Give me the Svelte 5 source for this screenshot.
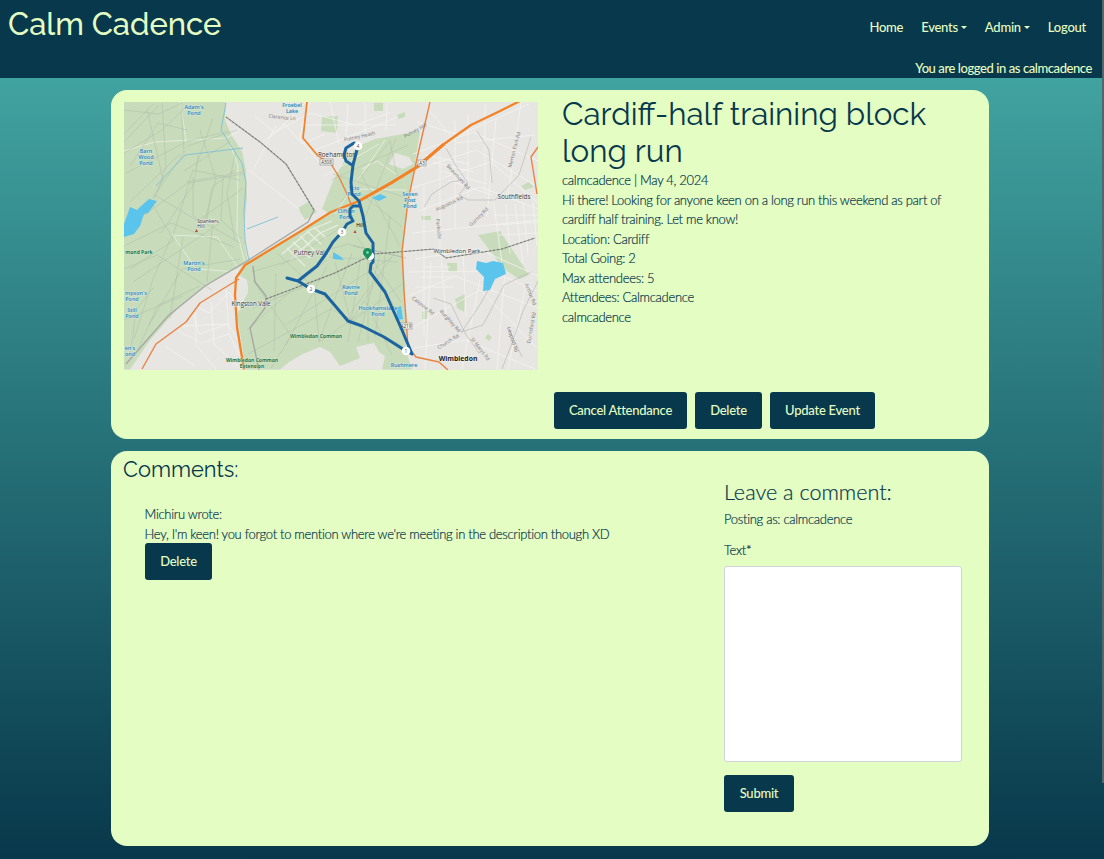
<script>
  const details = [
    'calmcadence | May 4, 2024',
    'Hi there! Looking for anyone keen on a long run this weekend as part of cardiff half training. Let me know!',
    'Location: Cardiff',
    'Total Going: 2',
    'Max attendees: 5',
    'Attendees: Calmcadence',
    'calmcadence'
  ];
  const nav = [
    { label: 'Home' },
    { label: 'Events', menu: true },
    { label: 'Admin', menu: true },
    { label: 'Logout' }
  ];

  const waterLabels = [
    [194, 109, "Adam's"], [194, 115, 'Pond'],
    [292, 107, 'Froebel'], [292, 113, 'Lake'],
    [146, 153, 'Barn'], [146, 159, 'Wood'], [146, 165, 'Pond'],
    [354, 190, 'Scio'], [354, 196, 'Pond'],
    [410, 196, 'Seven'], [410, 202, 'Post'], [410, 208, 'Pond'],
    [346, 213, 'Clifton'], [346, 219, 'Pond'],
    [194, 265, "Martin's"], [194, 271, 'Pond'],
    [136, 295, "mpson's"], [132, 301, 'Pond'],
    [132, 312, 'Still'], [132, 318, 'Pond'],
    [130, 350, "en's"], [130, 356, 'ond'],
    [351, 289, 'Ravine'], [351, 295, 'Pond'],
    [378, 310, 'Hookhamslade'], [378, 316, 'Pond'],
    [404, 367, 'Rushmere']
  ];
  const parkLabels = [
    [139, 254, 'mond Park'], [316, 338, 'Wimbledon Common'],
    [252, 362, 'Wimbledon Common'], [252, 368, 'Extension']
  ];
  const placeLabels = [
    [337, 156.500, 'Roehampton', 6.3], [514, 198.500, 'Southfields', 6.3],
    [311, 254.500, 'Putney Vale', 6.3], [457, 253, 'Wimbledon Park', 6.1],
    [251, 306, 'Kingston Vale', 6.2], [208, 223, 'Spankers', 5], [201, 228, 'Hill', 5]
  ];
  const roadLabels = [
    [360, 138, 'Putney Heath', -12], [416, 132, 'Putney Hill', -28],
    [516, 150, 'Merton Park Rd', -76], [457, 178, 'Beaumont Rd', 48],
    [450, 205, 'Augustus Rd', -25], [480, 218, 'Gurney Rd', -45],
    [282, 119, 'Clarence Ln', 6], [422, 307, 'Calonne Rd', 38],
    [449, 322, 'Burghley Rd', 48], [449, 343, 'Church Rd', -32],
    [479, 350, 'St Marys Rd', 52], [511, 340, 'Leopold Rd', 72],
    [529, 295, 'Arthur Rd', 68], [533, 328, 'Durnsford Rd', -80],
    [437, 229, 'Parkside', 84]
  ];
  const markers = [[358, 146, '4'], [342, 232, '3'], [311, 289, '2'], [406, 351, '1']];
</script>

<div class="page">
  <header>
    <div class="bar">
      <a class="brand" href="/">Calm Cadence</a>
      <nav>
        {#each nav as item}
          <a href="/">{item.label}{#if item.menu}<i class="caret"></i>{/if}</a>
        {/each}
      </nav>
    </div>
    <p class="session">You are logged in as calmcadence</p>
  </header>

  <main>
    <section class="card event">
      <div class="overview">
        <svg class="map" viewBox="124 102 414 267.5" preserveAspectRatio="none" role="img" aria-label="Route map">
          <rect x="124" y="102" width="414" height="268" fill="#e7e6e3" />
          <g fill="#c8dcbc">
            <path d="M124 102H226L225 120L232 136L242 151L246 170L247 199L244 225L245 245L248 263L232 271L205 286L180 306L150 340L130 369.5H124Z" />
            <path d="M245 265L330 214L322 209L333 181L343 163L358 146L375 139L420 131L415 163L411 183L406 222L403 252L405 290L406 350L412 369.500H382L385 356L379 352L374 343L356 347L360 358L340 366L330 352L320 347L303 354L289 362L280 369.5H245L242 345L237 315L248 292L247 280L239 275Z" />
            <path d="M298 208l10-6 9 10-12 8zM322 117l16-1-1 17-16-2zM374 103h9v8h-9zM397 115l8-3v5l-7 2zM478 235l22-4 29 44-10 4-15-10zM447 263h10v9h-8zM455 299l10-5-1 18-7-4zM422 312l6-2-1 9h-5zM488 334l4 3-3 4-4-3zM521 186l8-4 5 5-9 3zM421 216h10v4h-9z" />
          </g>
          <path d="M395 153l14 4 4 7-10 5-14-5z" fill="#e7e6e3" />
          <path d="M236 279q12 0 12 9t-10 14z" fill="#e5e6e1" />
          <path d="M282 254l28-24 22-9M290 260l30-27 18-8M287 248l18 18M293 242l17 16M300 236l15 15M307 231l14 13M314 227l12 11" fill="none" stroke="#e9ede2" stroke-width="1.300" />

          <g fill="none" stroke="#f5f5f1" stroke-width=".9" opacity=".85">
            <path d="M270 135l40-22 45 12 35-12M255 116l20 17 31-31M260 144l25-20 17 20 23-10M276 126l-22 42M310 102l-11 36 22 26M330 102l9 42M348 104l-2 35M365 103v32M387 102l-1 29M300 125h96M313 151l85-34M249 170l51 40" />
            <path d="M417 122l42 13 70-31M427 108l30 35 78-8M413 154l60-22 65 29M421 168l55-18 62 37M409 189l82-27 47 41M419 211l61-24 58 22M412 233l126-13M415 259l64-10 59 27M408 272l82-1 48 20M409 296l46-20 83 32M408 330l72-40 57 58M414 348l51-8 70 29M424 184v153M440 154v96M455 121v108M468 114v83M485 104v90M496 119l-9 97M521 102l-13 94M523 203l5 52M493 199l10 71M441 256l5 61M431 261l-6 108M463 249l3 67M480 280l-18 89M505 272l-8 97M525 289l-17 80M420 277h31M415 287h39M423 267h27M425 155l44 9M433 162l41 10M441 171l46 13M448 180l44 15M495 215h43M497 225l41-3M499 235l39-2M506 204l4 50M515 204l8 60M533 202l4 44" />
            <path d="M195 306l14 7 20-21 11 18M193 314l6 20 29-10 11 18M178 331l24 12 27-9 13 27M165 346l30 20M196 307v38l20 24M211 302l3 42 27 25M226 290l3 42M182 326l47-2" />
            <path d="M124 151L155 142L226 138L239 131M172 234l24 35 43 3M172 235l45 2 20 29M230 144l8 22-1 66 8 31M180 102l4 24 2 17M323 177l56-33M335 214l50-74M350 189l57 1M362 169l15-8 20 14" stroke="#edf2e4" />
          </g>
          <g fill="none" stroke="#adb8a4" stroke-width=".55" opacity=".8">
            <path d="M124 110l35 4 23-11M124 134l29-30M124 142l34-36M124 153l38-23 25-24M130 166l28-43 29 7M126 173l62-32 41-10M130 202l50-48M147 109l16 71-10 18M162 103l4 64-11 31M181 103l3 50-27 39M188 146l49-16M184 171l45-29M186 182l57-10M124 230l64-47 56-9M153 194l45 27 45-33M161 233l33-49 4-29M172 239l21-69 47 10M193 177v39l47 27M200 130l16 49-12 44M213 118l-17 49M207 220l5-33 23-17M223 178l-2 42 20 18M235 153l-8 41 8 47M149 199l25 41-44 29M124 246l47-23 63 24M124 269l33-14 55 35M171 238l-18 41-19 60M183 237l-13 81M213 221l-6 61M133 282l87-59M149 325l33-56 58-10M138 349l20-44 42-19M124 320l59-24M130 358l6-48 17-22" />
            <path d="M331 180l77-35M341 202l49-61 7 35M362 225l34-87M333 174l71 23M350 222l-69 43M277 253l74 68 31-48M251 272l97-28 55 13M253 308l55-23 68-32M247 330l79-70M248 354l83-45 72 37M253 280l38 56-20 32M276 273l-2 78M315 293l4 49 52-36M327 266l-41 79M335 262l16 61M352 253l-33 88M361 256l-13 86M368 253v89M381 250l-23 92M396 251l-46 63M390 216l-15 121M402 284l-54 41M357 237l44 65M285 325l107-68M374 270l27 49M365 301l27 54M329 257l69 5M361 174l39 72M358 191l44 36" />
          </g>
          <g fill="none" stroke="#aaa" stroke-width=".8">
            <path d="M424 207l8-13 19-12 12-2M446 148l10 18 12 17-9 12 9 5h27M495 200l24-25 12-38M477 131l12 19 3 33M433 298l18 6 14 29 14 20M461 332l22-7 21-40 27-13M498 272l-17 31-20 30M508 327l14 30M538 281l-15 30-11 32-10 26M353 246l53 12" opacity=".65" />
          </g>
          <g fill="none" stroke="#a5a8a3" stroke-width="1.4"><path d="M226 117l34 25 26 22 16 26 12 20-6 12-61 39-42 25-37 30-42 48M253 266l2 16 11 14-1 12-15 20 9 42" /></g>
          <path d="M266 299l69-26 39-19 60-5 12 9 56-9 33-11" fill="none" stroke="#a4a9a0" stroke-width="1.100" />
          <g fill="none" stroke="#555" stroke-width=".7" stroke-dasharray="2 2"><path d="M226 117l34 25 26 22 16 26 12 20M266 299l69-26 39-19 60-5 12 9 56-9 33-11" /></g>

          <g fill="none" stroke="#80bfd3" stroke-width=".9"><path d="M226 103l-5 27 12 19 9 14 4 20-2 29 1 28 4 21M156 186l29-31 58-7M247 229l31-12" /></g>
          <g fill="#5bc4ed">
            <path d="M140 207l9-8 8 2-9 12-4 1-4 12-6 8-10 3v-13l6-17 7 3zM477 261l9 2 7-2 10 2 3 11-11 5-5 11-7 1 1-14-8-8zM372 198l8-4 7 3-8 4zM333 252l7 4 4 4-11-1zM396 308l5-2 2 13-5 1z" />
          </g>

          <g fill="none" stroke-linejoin="round">
            <path d="M239 279l-39 24-14 19-30 22-14 25M430 102l-10 43-4 18-8 38-6 50 2 40 4 56 8 10 23 5 9 8M331 164l8 13 8 17 4 10M538 147l-7 10 6 37" stroke="#e98341" stroke-width="1.400" />
            <path d="M307 102l-4 36 15 18 15 9" stroke="#f38227" stroke-width="1.8" />
            <path d="M244 369.500L237 327L235 295L236 278L245 265L301 231L331 212L359 201L391 183L417 167L444 144L471 125L500 111L520 101" stroke="#f38227" stroke-width="2.3" />
            <path d="M359 201L391 183L417 167L444 144" stroke="#f38227" stroke-width="3" />
          </g>

          <g class="road">{#each roadLabels as [x, y, name, angle]}<text {x} {y} transform="rotate({angle} {x} {y})">{name}</text>{/each}</g>
          <g class="water">{#each waterLabels as [x, y, name]}<text {x} {y}>{name}</text>{/each}</g>
          <g class="park">{#each parkLabels as [x, y, name]}<text {x} {y}>{name}</text>{/each}</g>
          <g class="place">{#each placeLabels as [x, y, name, size]}<text {x} {y} font-size={size}>{name}</text>{/each}<text class="town" x="458" y="361">Wimbledon</text></g>
          <g class="shield">
            <rect x="320" y="159" width="13" height="6" /><text x="326.5" y="164">A308</text>
            <rect x="418" y="160" width="8" height="6" /><text x="422" y="165">A3</text>
            <rect x="400" y="323" width="12" height="6" /><text x="406" y="328">A219</text>
          </g>
          <path d="M195 232l1.5-3 1.500 3zM353.500 233l1.500-3 1.500 3z" fill="#b64732" />
          <text x="360" y="227" font-size="5" text-anchor="middle">Hill</text>

          <path d="M287 278L298 281L311 289L325 294L337 308L348 321L362 326L384 337L406 351L412 354L402 330L385 292L370 272L371 264L373 262L373 243L366 233L363 216L359 201L352 194L351 182L353 165L358 146L354 143L346 148L344 155L346 161L352 165M298 281L308 273L317 266L325 255L333 242L342 232L347 224L353 221L350 216V209L353 206H359" fill="none" stroke="#1c649f" stroke-width="3" stroke-linejoin="round" stroke-linecap="round" />
          {#each markers as [x, y, n]}
            <circle cx={x} cy={y} r="4.300" fill="#fff" />
            <text x={x} y={y + 1.7} font-size="5" text-anchor="middle" fill="#555">{n}</text>
          {/each}
          <circle cx="370" cy="256" r="4" fill="#fff" />
          <path d="M367.500 260c-2-4-4.500-4.500-4.500-7.500a4.500 4.500 0 019 0c0 3-2.500 3.500-4.500 7.500z" fill="#15935c" />
          <circle cx="367.500" cy="252.500" r="1.300" fill="#9ed4b9" />
        </svg>
        <div class="info">
          <h1>Cardiff-half training block<br />long run</h1>
          {#each details as line}<p>{line}</p>{/each}
        </div>
      </div>
      <div class="actions">
        <button style:width="133px">Cancel Attendance</button>
        <button style:width="67px">Delete</button>
        <button style:width="105px">Update Event</button>
      </div>
    </section>

    <section class="card discussion">
      <div class="comments">
        <h2>Comments:</h2>
        <article>
          <p>Michiru wrote:</p>
          <p>Hey, I'm keen! you forgot to mention where we're meeting in the description though XD</p>
          <button style:width="67px">Delete</button>
        </article>
      </div>
      <form>
        <h3>Leave a comment:</h3>
        <p>Posting as: calmcadence</p>
        <label for="body">Text*</label>
        <textarea id="body"></textarea>
        <button type="button" style:width="70px">Submit</button>
      </form>
    </section>
  </main>
  <div class="scroll"></div>
</div>

<style>
  :global(body) { margin: 0; overflow: hidden; }
  * { box-sizing: border-box; }
  .page {
    position: relative; height: 859px; overflow: hidden;
    font: 300 13px/19.5px Lato, sans-serif; color: #08384b;
    background: linear-gradient(#41a3a0 78px, #08384b 859px);
  }
  p, h1, h2, h3 { margin: 0; }
  main p, label { letter-spacing: -.3px; -webkit-text-stroke: .2px currentColor; }
  a { color: inherit; text-decoration: none; }
  header { height: 78px; background: #08384b; color: #e4fdc3; font-weight: 500; }
  .bar { display: flex; justify-content: space-between; height: 59px; padding: 0 18px 0 8px; }
  .brand { font: 500 31px/37px Raleway, Lato, sans-serif; padding-top: 6px; }
  nav { display: flex; gap: 18px; padding-top: 18px; letter-spacing: -.25px; }
  .caret { display: inline-block; margin-left: 3px; vertical-align: 3px; border: 3px solid transparent; border-top-color: currentColor; border-bottom: 0; }
  .session { text-align: right; padding-right: 12px; letter-spacing: -.42px; }
  main { width: 878px; margin: 12px 0 0 111px; display: flex; flex-direction: column; gap: 12px; }
  .card { background: #e4fdc3; border-radius: 16px; }
  .event { height: 349px; padding: 12px 13px 0 13px; }
  .overview { display: flex; gap: 24px; height: 290px; }
  .map { width: 414px; height: 267.5px; flex: none; }
  .info { width: 400px; margin-top: -6px; }
  h1 { font: 400 31.350px/37px Raleway, Lato, sans-serif; white-space: nowrap; padding-bottom: 1px; }
  .actions { display: flex; gap: 8px; margin-left: 430px; }
  button {
    height: 37px; padding: 0; border: 0; border-radius: 3px; background: #08384b;
    color: #e4fdc3; font: 500 13px/19px Lato, sans-serif; letter-spacing: -.25px; white-space: nowrap;
  }
  .discussion { height: 395px; display: flex; justify-content: space-between; padding: 0 27px 0 12px; }
  h2 { font: 400 21.800px/26px Raleway, Lato, sans-serif; padding-top: 6px; }
  article { padding: 22px 0 0 21.500px; }
  article button { display: block; margin: -1px 0 0 .5px; }
  form { width: 238px; padding-top: 29px; display: flex; flex-direction: column; align-items: flex-start; }
  h3 { font: 300 21.600px/25px Lato, sans-serif; padding-bottom: 5px; -webkit-text-stroke: .2px currentColor; }
  label { margin: 11px 0 6px; }
  textarea { width: 238px; height: 196px; border: 1px solid #ced4da; border-radius: 3px; background: #fff; margin: 0 0 12.500px; resize: none; }
  .scroll { position: absolute; right: 0; top: 0; width: 2px; height: 783px; background: #52666c; }

  .map text { font-family: "Open Sans", sans-serif; font-weight: 400; text-anchor: middle; }
  .water text { font-size: 5.4px; font-weight: 600; fill: #267fba; stroke: #d9eee0; stroke-width: .8px; paint-order: stroke; }
  .park text { font-size: 5px; font-weight: 700; fill: #25724b; stroke: #dcecd1; stroke-width: .7px; paint-order: stroke; }
  .place text { fill: #333; stroke: #f2f2ed; stroke-width: .8px; paint-order: stroke; }
  .place .town { font-size: 6.8px; font-weight: 700; fill: #222; }
  .road text { font-size: 5px; fill: #777; }
  .shield rect { fill: #f5f4ef; stroke: #777; stroke-width: .5; }
  .shield text { font-size: 4.500px; fill: #333; }
</style>
